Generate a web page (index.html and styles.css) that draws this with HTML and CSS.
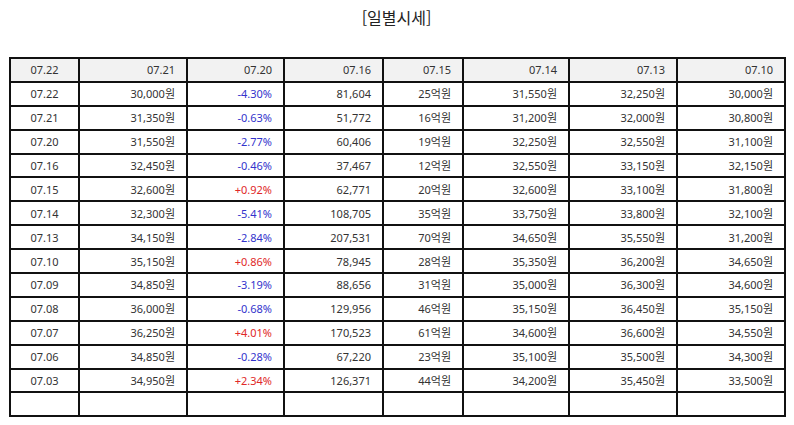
FILE: index.html
```html
<!DOCTYPE html>
<html lang="ko">
<head>
<meta charset="utf-8">
<title>일별시세</title>
<link rel="stylesheet" href="styles.css">
</head>
<body>
<div class="page">
  <h2 class="title">[일별시세]</h2>
  <table class="daily">
    <colgroup>
      <col class="c1"><col class="c2"><col class="c3"><col class="c4"><col class="c5"><col class="c6"><col class="c7"><col class="c8">
    </colgroup>
    <thead>
      <tr><th class="ctr">07.22</th><th>07.21</th><th>07.20</th><th>07.16</th><th>07.15</th><th>07.14</th><th>07.13</th><th>07.10</th></tr>
    </thead>
    <tbody>
      <tr><td class="ctr">07.22</td><td>30,000원</td><td class="dn">-4.30%</td><td>81,604</td><td>25억원</td><td>31,550원</td><td>32,250원</td><td>30,000원</td></tr>
      <tr><td class="ctr">07.21</td><td>31,350원</td><td class="dn">-0.63%</td><td>51,772</td><td>16억원</td><td>31,200원</td><td>32,000원</td><td>30,800원</td></tr>
      <tr><td class="ctr">07.20</td><td>31,550원</td><td class="dn">-2.77%</td><td>60,406</td><td>19억원</td><td>32,250원</td><td>32,550원</td><td>31,100원</td></tr>
      <tr><td class="ctr">07.16</td><td>32,450원</td><td class="dn">-0.46%</td><td>37,467</td><td>12억원</td><td>32,550원</td><td>33,150원</td><td>32,150원</td></tr>
      <tr><td class="ctr">07.15</td><td>32,600원</td><td class="up">+0.92%</td><td>62,771</td><td>20억원</td><td>32,600원</td><td>33,100원</td><td>31,800원</td></tr>
      <tr><td class="ctr">07.14</td><td>32,300원</td><td class="dn">-5.41%</td><td>108,705</td><td>35억원</td><td>33,750원</td><td>33,800원</td><td>32,100원</td></tr>
      <tr><td class="ctr">07.13</td><td>34,150원</td><td class="dn">-2.84%</td><td>207,531</td><td>70억원</td><td>34,650원</td><td>35,550원</td><td>31,200원</td></tr>
      <tr><td class="ctr">07.10</td><td>35,150원</td><td class="up">+0.86%</td><td>78,945</td><td>28억원</td><td>35,350원</td><td>36,200원</td><td>34,650원</td></tr>
      <tr><td class="ctr">07.09</td><td>34,850원</td><td class="dn">-3.19%</td><td>88,656</td><td>31억원</td><td>35,000원</td><td>36,300원</td><td>34,600원</td></tr>
      <tr><td class="ctr">07.08</td><td>36,000원</td><td class="dn">-0.68%</td><td>129,956</td><td>46억원</td><td>35,150원</td><td>36,450원</td><td>35,150원</td></tr>
      <tr><td class="ctr">07.07</td><td>36,250원</td><td class="up">+4.01%</td><td>170,523</td><td>61억원</td><td>34,600원</td><td>36,600원</td><td>34,550원</td></tr>
      <tr><td class="ctr">07.06</td><td>34,850원</td><td class="dn">-0.28%</td><td>67,220</td><td>23억원</td><td>35,100원</td><td>35,500원</td><td>34,300원</td></tr>
      <tr><td class="ctr">07.03</td><td>34,950원</td><td class="up">+2.34%</td><td>126,371</td><td>44억원</td><td>34,200원</td><td>35,450원</td><td>33,500원</td></tr>
      <tr class="empty"><td></td><td></td><td></td><td></td><td></td><td></td><td></td><td></td></tr>
    </tbody>
  </table>
</div>
</body>
</html>
```

FILE: styles.css
```css
html, body {
  margin: 0;
  padding: 0;
  background: #ffffff;
}

.page {
  padding: 6px 10px 0 9px;
  font-family: "Noto Sans", "Noto Sans CJK KR", sans-serif;
  color: #333333;
}

.title {
  margin: 0 0 29px 0;
  font-family: "Noto Sans CJK KR", "Noto Sans", sans-serif;
  font-size: 16px;
  font-weight: 400;
  line-height: 22px;
  text-align: center;
  color: #222222;
}

.daily {
  width: 775px;
  table-layout: fixed;
  border-collapse: collapse;
  border: 2px solid #111111;
}

.c1 { width: 69px; }
.c2 { width: 108px; }
.c3 { width: 97px; }
.c4 { width: 99px; }
.c5 { width: 80px; }
.c6 { width: 106px; }
.c7 { width: 108px; }
.c8 { width: 108px; }

.daily th,
.daily td {
  border: 2px solid #111111;
  padding: 0 11px 0 4px;
  height: 21.9px;
  line-height: 21px;
  font-size: 11px;
  font-weight: 400;
  text-align: right;
  white-space: nowrap;
  color: #333333;
}

.daily th {
  background: #f2f2f2;
}

.daily .ctr {
  text-align: center;
  padding: 0;
}

.daily .dn { color: #3333cc; }
.daily .up { color: #e02828; }
```
